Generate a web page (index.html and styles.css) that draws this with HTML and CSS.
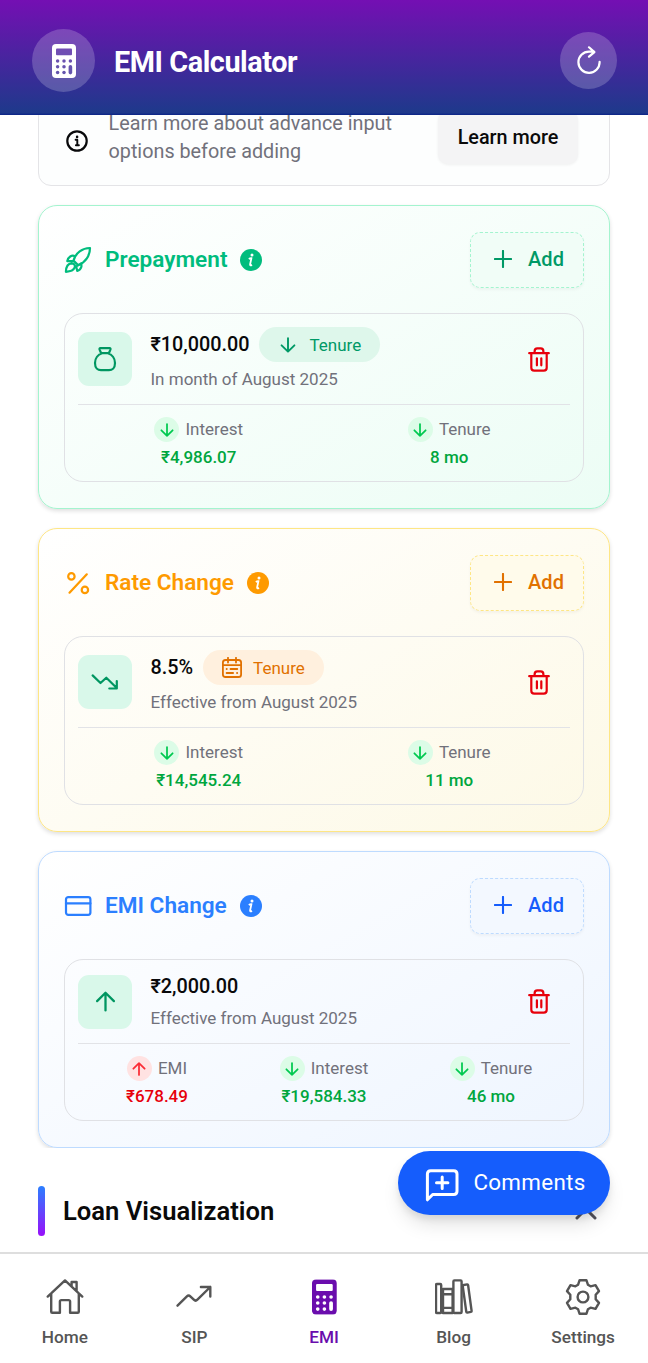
FILE: index.html
```html
<!DOCTYPE html>
<html lang="en">
<head>
<meta charset="utf-8">
<title>EMI Calculator</title>
<link rel="stylesheet" href="styles.css">
</head>
<body>
<svg class="defs" aria-hidden="true">
  <defs>
    <mask id="calc-mask">
      <rect width="24" height="34" rx="4" fill="#fff"/>
      <rect x="4" y="4.6" width="16" height="6.6" rx="1" fill="#000"/>
      <circle cx="5.6" cy="17" r="1.75"/><circle cx="12" cy="17" r="1.75"/><circle cx="18.4" cy="17" r="1.75"/>
      <circle cx="5.6" cy="22.8" r="1.75"/><circle cx="12" cy="22.8" r="1.75"/>
      <circle cx="5.6" cy="28.6" r="1.75"/><circle cx="12" cy="28.6" r="1.75"/>
      <rect x="16.6" y="21" width="3.6" height="9.4" rx="1.8"/>
    </mask>
  </defs>
  <symbol id="calc" viewBox="0 0 24 34"><rect width="24" height="34" fill="currentColor" mask="url(#calc-mask)"/></symbol>
  <symbol id="down" viewBox="0 0 16 16"><path d="M8 1.2v13.4M1.6 8.3 8 14.7l6.4-6.4"/></symbol>
  <symbol id="up" viewBox="0 0 16 16"><path d="M8 14.8V1.4M1.6 7.7 8 1.3l6.4 6.4"/></symbol>
  <symbol id="plus" viewBox="0 0 18 18"><path d="M9 .9v16.2M.9 9h16.2"/></symbol>
  <symbol id="trash" viewBox="0 0 22 25"><path d="M1.2 6.2h19.6M3.3 6.2v14.6q0 2.9 2.9 2.9h9.600q2.900 0 2.900-2.900V6.200M6.600 6v-1.600Q6.600 1.300 9.300 1.300h3.400q2.700 0 2.700 3.100V6M8.900 11.300v7M13.300 11.300v7"/></symbol>
  <symbol id="info" viewBox="0 0 22 22"><circle cx="11" cy="11" r="11" fill="currentColor" stroke="none"/><circle cx="12" cy="6" r="1.500" fill="#fff" stroke="none"/><path d="M8.800 9.900q1.300-.8 2.600-.7l-1.300 6.200q-.2 1.700 1.900.5" fill="none" stroke="#fff" stroke-width="1.800"/></symbol>
</svg>

<header class="topbar">
  <span class="round brand"><svg width="24" height="34"><use href="#calc"/></svg></span>
  <h1 class="app-title">EMI Calculator</h1>
  <button class="round reset"><svg class="ico" width="26" height="30" viewBox="0 0 26 30"><path d="M23.600 15.800A10.600 10.600 0 1 1 13 5.600h5.200M13 1.300l5.400 4.800-5.400 4.600"/></svg></button>
</header>

<main class="scroll">
  <section class="notice">
    <svg class="ico notice-ico" width="22" height="22" viewBox="0 0 22 22"><circle cx="11" cy="11" r="9.700"/><path d="M9.600 9.800h1.700v5.200M9.900 15.200h3" stroke-width="1.900"/><circle cx="11.100" cy="6.900" r="1.300" fill="currentColor" stroke="none"/></svg>
    <p class="notice-text">Learn more about advance input options before adding</p>
    <button class="learn">Learn more</button>
  </section>

  <section class="card green">
    <div class="card-head">
      <svg class="ico head-ico" width="28" height="28" viewBox="0 0 28 28"><path d="M9.500 14.600C11.500 7 18.500 1.900 26 2c0 7.500-4.500 14.500-11.700 17.200zM11.200 10.300C7.500 8.600 4.300 11 3.300 15.100l6.100-.1M14.200 19.200l3.200-2v3.600q-.9 3.300-4.200 4l-1-4.400zM7.700 17.400c2.400.1 3.800 2 2.900 4.300-1.200 3.100-4.900 3.900-8.700 4.100.1-4 1.700-8.100 5.800-8.400z"/></svg>
      <h2 class="card-title">Prepayment</h2>
      <svg class="info" width="22" height="22"><use href="#info"/></svg>
      <button class="add"><svg class="ico" width="18" height="18"><use href="#plus"/></svg>Add</button>
    </div>
    <div class="entry">
      <div class="entry-top">
        <span class="tile"><svg class="ico" width="24" height="26" viewBox="0 0 24 26"><path d="M7.400 2.200h9.200q1.300 0 .8 1.400l-1 2.400q-.5 1.200-1.700 1.200H9.300q-1.200 0-1.700-1.200l-1-2.400q-.5-1.400.8-1.400zM9.100 7.200C5 8.500 2 12.500 2 16.900c0 5 2.800 7.300 6 7.300h8c3.200 0 6-2.300 6-7.300 0-4.400-3-8.400-7.100-9.700"/></svg></span>
        <div class="detail">
          <div class="amount-row"><b class="amount">₹10,000.00</b><span class="pill"><svg class="ico" width="16" height="16"><use href="#down"/></svg>Tenure</span></div>
          <p class="when">In month of August 2025</p>
        </div>
        <svg class="ico trash" width="22" height="25"><use href="#trash"/></svg>
      </div>
      <div class="stats">
        <div class="stat"><div class="stat-label"><span class="dot"><svg class="ico" width="14" height="14"><use href="#down"/></svg></span><span class="label">Interest</span></div><b class="value">₹4,986.07</b></div>
        <div class="stat"><div class="stat-label"><span class="dot"><svg class="ico" width="14" height="14"><use href="#down"/></svg></span><span class="label">Tenure</span></div><b class="value">8 mo</b></div>
      </div>
    </div>
  </section>

  <section class="card amber">
    <div class="card-head">
      <svg class="ico head-ico" width="28" height="28" viewBox="0 0 28 28"><path d="M5.500 23.700 22.800 5.300"/><circle cx="7.400" cy="7.400" r="3.200"/><circle cx="20.900" cy="20.900" r="3.200"/></svg>
      <h2 class="card-title">Rate Change</h2>
      <svg class="info" width="22" height="22"><use href="#info"/></svg>
      <button class="add"><svg class="ico" width="18" height="18"><use href="#plus"/></svg>Add</button>
    </div>
    <div class="entry">
      <div class="entry-top">
        <span class="tile"><svg class="ico" width="28" height="18" viewBox="0 0 28 18"><path d="M1.600 2.400 9.500 10l5.800-5.300 9.700 9.500M18.300 15.500h7.500V8"/></svg></span>
        <div class="detail">
          <div class="amount-row"><b class="amount">8.5%</b><span class="pill pill-cal"><svg class="ico" width="20" height="21" viewBox="0 0 20 21"><path d="M3.500 3h13q2.600 0 2.600 2.600v11.800q0 2.600-2.600 2.600h-13Q.9 20 .9 17.400V5.600Q.9 3 3.500 3zM1 8.200h18M6 .8v4.700M14 .8v4.700M4.600 12h.2M8.500 12h6.800M4.600 16h6.500M15 16h.2"/></svg>Tenure</span></div>
          <p class="when">Effective from August 2025</p>
        </div>
        <svg class="ico trash" width="22" height="25"><use href="#trash"/></svg>
      </div>
      <div class="stats">
        <div class="stat"><div class="stat-label"><span class="dot"><svg class="ico" width="14" height="14"><use href="#down"/></svg></span><span class="label">Interest</span></div><b class="value">₹14,545.24</b></div>
        <div class="stat"><div class="stat-label"><span class="dot"><svg class="ico" width="14" height="14"><use href="#down"/></svg></span><span class="label">Tenure</span></div><b class="value">11 mo</b></div>
      </div>
    </div>
  </section>

  <section class="card blue">
    <div class="card-head">
      <svg class="ico head-ico" width="28" height="28" viewBox="0 0 28 28"><rect x="2" y="5.200" width="24.400" height="17.600" rx="2.300"/><path d="M2 11.400h24.400"/></svg>
      <h2 class="card-title">EMI Change</h2>
      <svg class="info" width="22" height="22"><use href="#info"/></svg>
      <button class="add"><svg class="ico" width="18" height="18"><use href="#plus"/></svg>Add</button>
    </div>
    <div class="entry">
      <div class="entry-top">
        <span class="tile"><svg class="ico up-big" width="21" height="21"><use href="#up"/></svg></span>
        <div class="detail">
          <div class="amount-row"><b class="amount">₹2,000.00</b></div>
          <p class="when">Effective from August 2025</p>
        </div>
        <svg class="ico trash" width="22" height="25"><use href="#trash"/></svg>
      </div>
      <div class="stats three">
        <div class="stat"><div class="stat-label"><span class="dot bad"><svg class="ico" width="14" height="14"><use href="#up"/></svg></span><span class="label">EMI</span></div><b class="value loss">₹678.49</b></div>
        <div class="stat"><div class="stat-label"><span class="dot"><svg class="ico" width="14" height="14"><use href="#down"/></svg></span><span class="label">Interest</span></div><b class="value">₹19,584.33</b></div>
        <div class="stat"><div class="stat-label"><span class="dot"><svg class="ico" width="14" height="14"><use href="#down"/></svg></span><span class="label">Tenure</span></div><b class="value">46 mo</b></div>
      </div>
    </div>
  </section>

  <section class="visual">
    <span class="accent"></span>
    <h2 class="visual-title">Loan Visualization</h2>
    <svg class="ico chevron" width="22" height="14" viewBox="0 0 22 14"><path d="M2 12l9-9 9 9"/></svg>
  </section>
  <button class="comments"><svg class="ico" width="34" height="34" viewBox="0 0 34 34"><path d="M2.400 31.800V6q0-3.300 3.300-3.300h23q3.300 0 3.300 3.300v17.200q0 3.300-3.300 3.300H7.700zM17.200 9.100v11.400M11.500 14.800h11.400"/></svg><span class="comments-text">Comments</span></button>
</main>

<nav class="tabs">
  <a class="tab"><svg class="ico" width="38" height="38" viewBox="0 0 38 38"><path d="M1.700 18.600 19 2.400l17.300 16.200M5.200 15.500v18.300q0 1 1 1h7.700V23.600q0-1.500 1.500-1.500h7.200q1.500 0 1.500 1.500v11.200h7.700q1 0 1-1V15.500M25.600 8.300V4h5v9"/></svg>Home</a>
  <a class="tab"><svg class="ico" width="38" height="38" viewBox="0 0 38 38"><path d="M2.500 27.700 11.900 18.300q1.700-1.700 3.400 0l3.500 3.400q1.800 1.800 3.600 0L35.300 9M25.900 9h9.400v9.500"/></svg>SIP</a>
  <a class="tab active"><svg width="26" height="38" viewBox="0 0 26 38"><use href="#calc" x=".9" y="1.300" width="25" height="35.400"/></svg>EMI</a>
  <a class="tab"><svg class="ico" width="38" height="38" viewBox="0 0 38 38"><rect x="1" y="6" width="5.200" height="29" rx="1"/><path d="M8 35h9.600V11H8zM8 16.200h9.600M8 29.900h9.600"/><rect x="18.400" y="2.400" width="8.200" height="32.600" rx="1"/><path d="m27.600 7.200 4.500-.8q.9-.1 1 .7l3.500 25.800q.1.900-.7 1l-3.600.7q-.9.100-1-.7z"/></svg>Blog</a>
  <a class="tab"><svg class="ico" width="38" height="38" viewBox="0 0 38 38"><circle cx="19" cy="19" r="5.400"/><path d="M15.600 2.200h6.800l1.500 4.500 2.700 1.600 4.900-1.200 3.500 6-3.300 3.700v4.400l3.300 3.700-3.500 6-4.900-1.200-2.700 1.600-1.500 4.500h-6.800l-1.500-4.500-2.700-1.600-4.900 1.200-3.500-6 3.300-3.700v-4.400L3 13.100l3.500-6 4.900 1.200 2.700-1.600z"/></svg>Settings</a>
</nav>
</body>
</html>
```
FILE: styles.css
```css
* { box-sizing: border-box; }
body { margin: 0; width: 648px; height: 1363px; overflow: hidden; display: flex; flex-direction: column; background: #fff; color: #0a0a0a; font-family: Roboto, "Liberation Sans", sans-serif; }
h1, h2, p { margin: 0; }
button { border: 0; padding: 0; font: inherit; color: inherit; }
svg { flex: none; display: block; }
.defs { position: absolute; width: 0; height: 0; }
.ico { fill: none; stroke: currentColor; stroke-width: 2.2; stroke-linecap: round; stroke-linejoin: round; }

.topbar { height: 115px; flex: none; display: flex; align-items: center; padding: 6px 31px 0 32px; color: #fff; background: linear-gradient(#740fb3, #1e398b 98%, #0b2387); position: relative; z-index: 1; }
.round { display: grid; place-items: center; border-radius: 50%; background: rgba(255, 255, 255, .2); }
.brand { width: 63px; height: 63px; }
.reset { width: 57px; height: 57px; margin-left: auto; }
.app-title { margin: 2px 0 0 19px; font-size: 28.8px; line-height: 36px; font-weight: 700; letter-spacing: -.43px; }

.scroll { flex: 1; min-height: 0; overflow: hidden; padding: 0 38px; position: relative; }
.notice { display: flex; align-items: flex-start; height: 110px; margin: -39px 0 19px; padding: 32px 31px 0 27px; border: 1px solid #e4e4e7; border-radius: 13px; background: #fdfefe; }
.notice-ico { margin-top: 21px; color: #09090b; }
.notice-text { width: 300px; margin: 1px 0 0 20.5px; font-size: 19.8px; line-height: 28px; color: #71717b; }
.learn { width: 140px; height: 54px; margin: 1px 0 0 auto; border-radius: 10px; background: #f4f4f5; font-size: 19.8px; font-weight: 500; box-shadow: 0 1px 3px rgba(0, 0, 0, .06); }

.card { padding: 26px 25px; margin-bottom: 19px; border: 1px solid; border-radius: 19px; box-shadow: 0 2px 4px rgba(0, 0, 0, .13); }
.green { color: #00bc7d; --strong: #096; border-color: #a4f4cf; background: linear-gradient(150deg, #fff, #ecfdf5); --btn: #f1fdf7; --pill: #def7eb; --line: #a4f4cf; }
.amber { color: #fe9a00; --strong: #e17100; border-color: #fee685; background: linear-gradient(150deg, #fff, #fdf9e6); --btn: #fffbeb; --pill: #fff0de; --line: #fee685; }
.blue { color: #2b7fff; --strong: #155dfc; border-color: #bedbff; background: linear-gradient(150deg, #fff, #eef5ff); --btn: #f3f8ff; --line: #bedbff; margin-bottom: 0; }
.card-head { display: flex; align-items: center; height: 56px; margin-bottom: 25px; }
.card-title { margin: -1px 13px 0 13px; font-size: 22.6px; line-height: 32px; font-weight: 600; }
.head-ico { margin-top: -1px; }
.add { display: flex; align-items: center; justify-content: center; gap: 16px; width: 114px; height: 56px; margin-left: auto; padding: 0 0 2px 4px; border: 1px dashed var(--line); border-radius: 10px; background: var(--btn); color: var(--strong); font-size: 20px; font-weight: 500; box-shadow: 0 2px 3px rgba(0, 0, 0, .04); }
.add .ico { stroke-width: 2.1; }

.entry { border: 1px solid #e0e1e5; border-radius: 19px; padding: 0 13px; color: #71717b; }
.entry-top { display: flex; align-items: center; padding: 13px 0; border-bottom: 1px solid #e2e3e7; }
.tile { display: grid; place-items: center; width: 54px; height: 54px; border-radius: 11px; background: #d9f8ea; color: #009661; }
.up-big { stroke-width: 1.75; }
.detail { margin-left: 18.5px; }
.amount-row { display: flex; align-items: center; gap: 10px; min-height: 28px; margin-bottom: 5px; }
.amount { margin-top: -1px; font-size: 19.8px; line-height: 27px; font-weight: 500; color: #09090b; }
.pill .ico { stroke-width: 1.9; }
.pill { display: flex; align-items: center; gap: 13px; height: 35px; padding: 0 19px 0 21px; border-radius: 18px; background: var(--pill); color: var(--strong); font-size: 17px; }
.pill-cal { gap: 11px; padding-left: 19px; }
.pill-cal .ico { stroke-width: 1.8; }
.when { font-size: 17px; line-height: 24px; }
.trash { margin: 0 20px 0 auto; color: #e7000b; stroke-width: 2.2; }
.stats { display: grid; grid-template-columns: 1fr 1fr; gap: 9px; padding: 12px 0; }
.three { grid-template-columns: 1fr 1fr 1fr; }
.stat { display: flex; flex-direction: column; align-items: center; gap: 3px; }
.stat-label { display: flex; align-items: center; gap: 6px; height: 25px; font-size: 17px; }
.label { margin-top: -2px; }
.dot { display: grid; place-items: center; width: 25px; height: 25px; border-radius: 50%; background: #dcfce7; color: #00c950; }
.dot .ico { stroke-width: 2; }
.bad { background: #ffe2e2; color: #fb2c36; }
.value { font-size: 17px; line-height: 24px; font-weight: 500; color: #00a63e; }
.loss { color: #e7000b; }

.visual { display: flex; align-items: center; height: 126px; padding-right: 13px; background: #fff; position: relative; }
.accent { width: 7px; height: 50px; border-radius: 4px; background: linear-gradient(#2b7fff, #9810fa); }
.visual-title { margin: -1px 0 0 18px; font-size: 25.6px; font-weight: 600; }
.chevron { color: #52525c; margin: 4px 0 0 auto; stroke-width: 3; }
.comments { position: absolute; right: 38px; bottom: 37px; width: 212px; height: 64px; border-radius: 32px; display: flex; align-items: center; justify-content: center; gap: 14px; padding-left: 3px; background: #155dfc; color: #fff; font-size: 22.4px; letter-spacing: .3px; box-shadow: 0 12px 20px -4px rgba(0, 0, 0, .13), 0 4px 7px rgba(0, 0, 0, .08); }
.comments .ico { stroke-width: 3; margin-top: 3px; }
.comments-text { margin-top: -2px; }

.tabs { height: 111px; flex: none; display: flex; border-top: 2px solid #dedede; background: #fff; }
.tab { flex: 1; display: flex; flex-direction: column; align-items: center; gap: 10px; padding-top: 24px; color: #555; font-size: 17.2px; line-height: 22px; font-weight: 500; }
.tab .ico { stroke-width: 2.4; }
.active { color: #6a0dad; }
```
